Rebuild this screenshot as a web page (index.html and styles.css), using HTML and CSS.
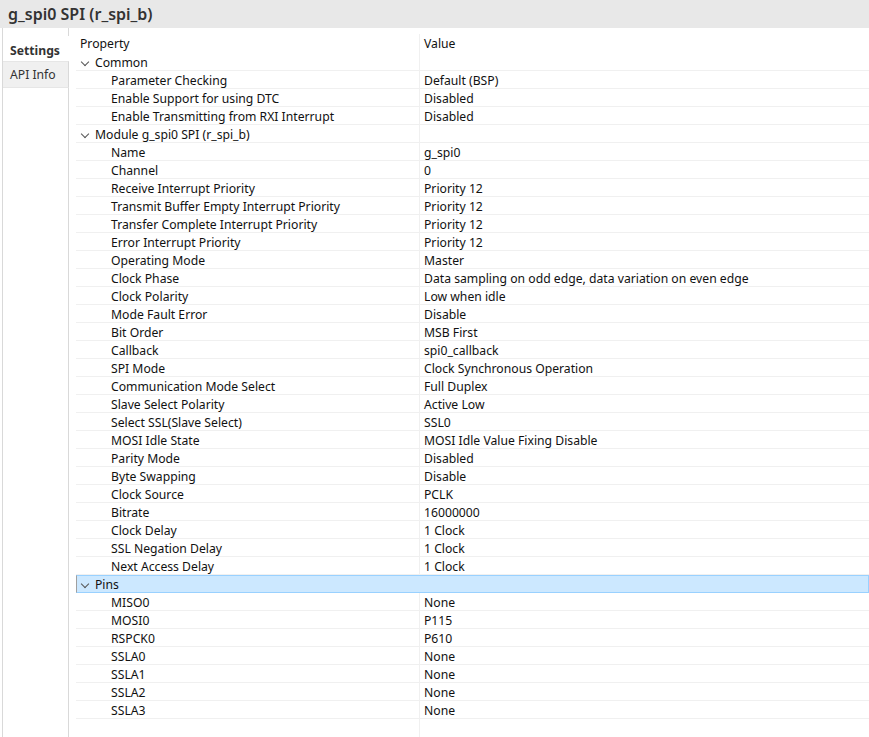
FILE: index.html
```html
<!DOCTYPE html>
<html>
<head>
<meta charset="utf-8">
<link rel="stylesheet" href="styles.css">
</head>
<body>
<div class="title">g_spi0 SPI (r_spi_b)</div>
<div class="main">
  <div class="tabs">
    <div class="tab-top"></div>
    <div class="tab active">Settings</div>
    <div class="tab">API Info</div>
    <div class="tab-rest"></div>
  </div>
  <div class="panel">
    <div class="table">
      <div class="row head"><div class="c1">Property</div><div class="c2">Value</div></div>
      <div class="row group"><div class="c1"><span class="chev"></span>Common</div><div class="c2"></div></div>
      <div class="row"><div class="c1 ch">Parameter Checking</div><div class="c2">Default (BSP)</div></div>
      <div class="row"><div class="c1 ch">Enable Support for using DTC</div><div class="c2">Disabled</div></div>
      <div class="row"><div class="c1 ch">Enable Transmitting from RXI Interrupt</div><div class="c2">Disabled</div></div>
      <div class="row group"><div class="c1"><span class="chev"></span>Module g_spi0 SPI (r_spi_b)</div><div class="c2"></div></div>
      <div class="row"><div class="c1 ch">Name</div><div class="c2">g_spi0</div></div>
      <div class="row"><div class="c1 ch">Channel</div><div class="c2">0</div></div>
      <div class="row"><div class="c1 ch">Receive Interrupt Priority</div><div class="c2">Priority 12</div></div>
      <div class="row"><div class="c1 ch">Transmit Buffer Empty Interrupt Priority</div><div class="c2">Priority 12</div></div>
      <div class="row"><div class="c1 ch">Transfer Complete Interrupt Priority</div><div class="c2">Priority 12</div></div>
      <div class="row"><div class="c1 ch">Error Interrupt Priority</div><div class="c2">Priority 12</div></div>
      <div class="row"><div class="c1 ch">Operating Mode</div><div class="c2">Master</div></div>
      <div class="row"><div class="c1 ch">Clock Phase</div><div class="c2">Data sampling on odd edge, data variation on even edge</div></div>
      <div class="row"><div class="c1 ch">Clock Polarity</div><div class="c2">Low when idle</div></div>
      <div class="row"><div class="c1 ch">Mode Fault Error</div><div class="c2">Disable</div></div>
      <div class="row"><div class="c1 ch">Bit Order</div><div class="c2">MSB First</div></div>
      <div class="row"><div class="c1 ch">Callback</div><div class="c2">spi0_callback</div></div>
      <div class="row"><div class="c1 ch">SPI Mode</div><div class="c2">Clock Synchronous Operation</div></div>
      <div class="row"><div class="c1 ch">Communication Mode Select</div><div class="c2">Full Duplex</div></div>
      <div class="row"><div class="c1 ch">Slave Select Polarity</div><div class="c2">Active Low</div></div>
      <div class="row"><div class="c1 ch">Select SSL(Slave Select)</div><div class="c2">SSL0</div></div>
      <div class="row"><div class="c1 ch">MOSI Idle State</div><div class="c2">MOSI Idle Value Fixing Disable</div></div>
      <div class="row"><div class="c1 ch">Parity Mode</div><div class="c2">Disabled</div></div>
      <div class="row"><div class="c1 ch">Byte Swapping</div><div class="c2">Disable</div></div>
      <div class="row"><div class="c1 ch">Clock Source</div><div class="c2">PCLK</div></div>
      <div class="row"><div class="c1 ch">Bitrate</div><div class="c2">16000000</div></div>
      <div class="row"><div class="c1 ch">Clock Delay</div><div class="c2">1 Clock</div></div>
      <div class="row"><div class="c1 ch">SSL Negation Delay</div><div class="c2">1 Clock</div></div>
      <div class="row"><div class="c1 ch">Next Access Delay</div><div class="c2">1 Clock</div></div>
      <div class="row group selected"><div class="c1"><span class="chev"></span>Pins</div><div class="c2"></div></div>
      <div class="row"><div class="c1 ch">MISO0</div><div class="c2">None</div></div>
      <div class="row"><div class="c1 ch">MOSI0</div><div class="c2">P115</div></div>
      <div class="row"><div class="c1 ch">RSPCK0</div><div class="c2">P610</div></div>
      <div class="row"><div class="c1 ch">SSLA0</div><div class="c2">None</div></div>
      <div class="row"><div class="c1 ch">SSLA1</div><div class="c2">None</div></div>
      <div class="row"><div class="c1 ch">SSLA2</div><div class="c2">None</div></div>
      <div class="row"><div class="c1 ch">SSLA3</div><div class="c2">None</div></div>
      <div class="row filler"><div class="c1"></div><div class="c2"></div></div>
    </div>
  </div>
</div>
</body>
</html>
```
FILE: styles.css
```css
html, body {
  margin: 0;
  padding: 0;
  background: #ffffff;
  font-family: "Noto Sans", "Open Sans", sans-serif;
  font-size: 12.2px;
  color: #111111;
}
.title {
  height: 28px;
  line-height: 28px;
  background: #e8e8e8;
  padding-left: 8px;
  font-size: 16px;
  font-weight: 600;
  color: #333333;
}
.main {
  display: flex;
  height: 709px;
  overflow: hidden;
}
.tabs {
  width: 67px;
  margin-left: 2px;
  border-left: 1px solid #d9d9d9;
  display: flex;
  flex-direction: column;
  box-sizing: border-box;
  flex-shrink: 0;
}
.tab-top {
  height: 8px;
  border-right: 1px solid #d9d9d9;
}
.tab {
  height: 25px;
  line-height: 25px;
  padding-left: 7px;
  color: #333;
  border-right: 1px solid #d9d9d9;
  border-top: 1px solid #e6e6e6;
  background: #f0f0f0;
}
.tab.active {
  height: 24px;
  line-height: 27px;
  background: #ffffff;
  font-weight: 700;
  border-right-color: transparent;
  border-top-color: transparent;
}
.tab-rest {
  flex: 1;
  border-right: 1px solid #d9d9d9;
  border-top: 1px solid #e6e6e6;
}
.panel {
  flex: 1;
  padding-left: 7px;
  padding-top: 6px;
  overflow: hidden;
}
.row {
  display: flex;
  height: 18px;
  line-height: 19px;
  box-sizing: border-box;
  border-bottom: 1px solid #f0f0f0;
  white-space: nowrap;
}
.row.head {
  height: 19px;
  border-bottom: none;
  line-height: 20px;
}
.c1 {
  box-sizing: border-box;
  width: 344px;
  flex-shrink: 0;
  padding-left: 4px;
  border-right: 1px solid #f0f0f0;
  overflow: hidden;
}
.c2 {
  flex: 1;
  padding-left: 4px;
}
.c1.ch {
  padding-left: 35px;
}
.chev {
  display: inline-block;
  width: 5px;
  height: 5px;
  border-right: 1px solid #555;
  border-bottom: 1px solid #555;
  transform: rotate(45deg);
  margin: 0 7px 4px 2px;
  vertical-align: middle;
}
.row.selected {
  background: #cce8ff;
  border: 1px solid #99d1ff;
  border-left-color: #a0a0a0;
  line-height: 17px;
}
.row.selected .c1 {
  border-right-color: transparent;
  padding-left: 3px;
}
.row.filler {
  height: 30px;
  border-bottom: none;
}
```
